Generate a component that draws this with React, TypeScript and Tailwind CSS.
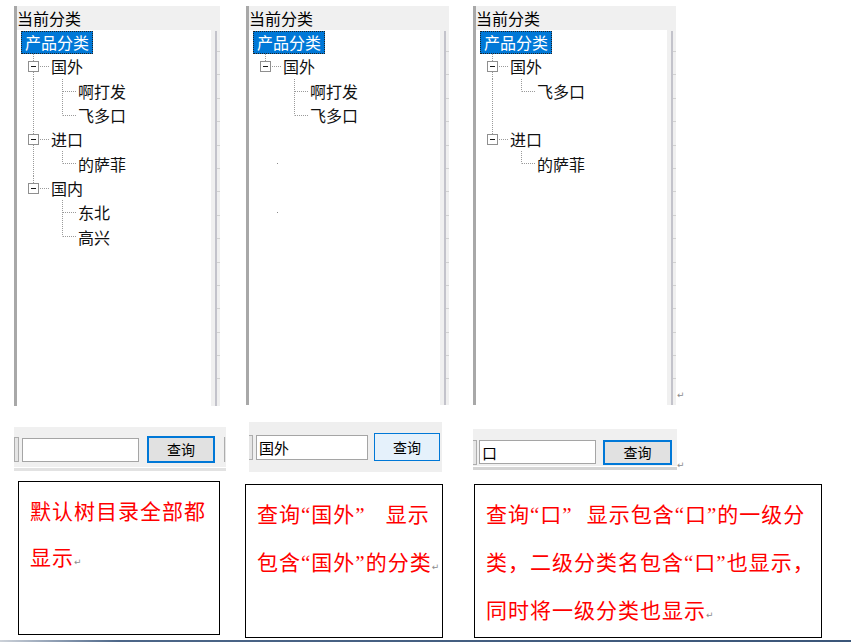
import type { ReactNode } from "react";

type Row =
  | { kind: "root" }
  | { kind: "l1"; label: string; more: boolean }
  | { kind: "l2"; label: string; trunk: boolean; last: boolean }
  | { kind: "gap"; trunk: boolean; dot?: boolean };

const DOT = { stroke: "#9a9a9a", strokeWidth: 1, strokeDasharray: "1 1" };

const fullTree: Row[] = [
  { kind: "root" },
  { kind: "l1", label: "国外", more: true },
  { kind: "l2", label: "啊打发", trunk: true, last: false },
  { kind: "l2", label: "飞多口", trunk: true, last: true },
  { kind: "l1", label: "进口", more: true },
  { kind: "l2", label: "的萨菲", trunk: true, last: true },
  { kind: "l1", label: "国内", more: false },
  { kind: "l2", label: "东北", trunk: false, last: false },
  { kind: "l2", label: "高兴", trunk: false, last: true },
];

const abroadTree: Row[] = [
  { kind: "root" },
  { kind: "l1", label: "国外", more: false },
  { kind: "l2", label: "啊打发", trunk: false, last: false },
  { kind: "l2", label: "飞多口", trunk: false, last: true },
  { kind: "gap", trunk: false },
  { kind: "gap", trunk: false, dot: true },
  { kind: "gap", trunk: false },
  { kind: "gap", trunk: false, dot: true },
];

const mouthTree: Row[] = [
  { kind: "root" },
  { kind: "l1", label: "国外", more: true },
  { kind: "l2", label: "飞多口", trunk: true, last: true },
  { kind: "gap", trunk: true },
  { kind: "l1", label: "进口", more: false },
  { kind: "l2", label: "的萨菲", trunk: false, last: true },
];

function TreeRow({ row }: { row: Row }) {
  if (row.kind === "root") {
    return (
      <div className="flex h-[24.3px] items-center">
        <span className="ml-[4px] flex h-[23px] items-center border border-dotted border-[#222] bg-[#0078d7] px-[3px] text-[16px] leading-none text-white">
          产品分类
        </span>
      </div>
    );
  }

  if (row.kind === "gap") {
    return (
      <div className="flex h-[24.3px] items-center">
        <svg width="34" height="100%" className="shrink-0">
          {row.trunk && <line x1="16.5" y1="0" x2="16.5" y2="25" {...DOT} />}
          {row.dot && <rect x="28" y="12" width="1" height="1" fill="#8a8a8a" />}
        </svg>
      </div>
    );
  }

  if (row.kind === "l1") {
    return (
      <div className="flex h-[24.3px] items-center">
        <svg width="34" height="100%" className="shrink-0">
          <line x1="16.5" y1="0" x2="16.5" y2="7" {...DOT} />
          {row.more && <line x1="16.5" y1="18" x2="16.5" y2="25" {...DOT} />}
          <rect x="11.5" y="7.5" width="10" height="10" fill="white" stroke="#8f8f8f" />
          <line x1="14" y1="12.5" x2="19" y2="12.5" stroke="#1a1a1a" />
          <line x1="23" y1="12.5" x2="32" y2="12.5" {...DOT} />
        </svg>
        <span className="text-[16px] leading-none text-[#111]">{row.label}</span>
      </div>
    );
  }

  return (
    <div className="flex h-[24.3px] items-center">
      <svg width="61" height="100%" className="shrink-0">
        {row.trunk && <line x1="16.5" y1="0" x2="16.5" y2="25" {...DOT} />}
        <line x1="45.5" y1="0" x2="45.5" y2={row.last ? 12.5 : 25} {...DOT} />
        <line x1="46" y1="12.5" x2="59" y2="12.5" {...DOT} />
      </svg>
      <span className="text-[16px] leading-none text-[#111]">{row.label}</span>
    </div>
  );
}

function TreePanel({ rows, className }: { rows: Row[]; className: string }) {
  return (
    <div className={`flex flex-col border-l-[3px] border-[#a8a8a8] bg-[#f0f0f0] ${className}`}>
      <div className="flex h-[24px] shrink-0 items-center text-[16px] leading-none text-black">当前分类</div>
      <div className="flex min-h-0 flex-1 overflow-hidden">
        <div className="flex-1 bg-white">
          {rows.map((row, i) => (
            <TreeRow key={i} row={row} />
          ))}
        </div>
        <div className="flex w-[9px]">
          <div className="w-[4px]" />
          <div className="mt-px w-[2px] bg-[#c3c3cb]" />
          <div className="flex w-[3px] flex-col pt-[21px]">
            {Array.from({ length: 15 }).map((_, i) => (
              <div key={i} className="h-[23.4px] shrink-0 border-t border-[#d2d2d2]" />
            ))}
          </div>
        </div>
      </div>
    </div>
  );
}

function Mark() {
  return (
    <span className="font-['DejaVu_Sans',sans-serif] text-[9px] leading-none tracking-normal text-[#8c8c8c]">
      ↵
    </span>
  );
}

function Quote({ children }: { children: ReactNode }) {
  return <span className="font-['Liberation_Serif',serif]">{children}</span>;
}

function NoteBox({ className, children }: { className: string; children: ReactNode }) {
  return (
    <div
      className={`border border-black pl-[11px] pt-[5px] text-[21px] leading-[46px] tracking-[1px] whitespace-nowrap text-[#ff0000] ${className}`}
    >
      {children}
    </div>
  );
}

export default function App() {
  return (
    <div className="flex h-[642px] w-[851px] flex-col overflow-hidden bg-white font-['Noto_Sans_CJK_SC','Noto_Sans',sans-serif]">
      <div className="flex h-[640px] items-start">
        {/* 默认 */}
        <div className="ml-[14px] mt-[6px] flex w-[212px] flex-col items-start">
          <TreePanel rows={fullTree} className="h-[400px] w-[206px]" />
          <div className="mt-[21px] flex h-[44px] w-[212px] flex-col bg-[#f0f0f0]">
            <div className="flex flex-1 items-center pt-[5px]">
              <div className="h-[25px] w-[5px] border border-[#adadad] bg-[#e5e5e5]" />
              <input
                readOnly
                value=""
                className="ml-[3px] h-[24px] w-[117px] border border-[#a5a5a5] bg-white px-[2px] text-[15px] outline-none"
              />
              <button className="ml-[8px] h-[27px] w-[68px] border-2 border-[#0078d7] bg-[#e1e1e1] text-[14px] text-black">
                查询
              </button>
              <div className="ml-[9px] h-[25px] w-[2px] border-l border-[#adadad] bg-[#e5e5e5]" />
            </div>
            <div className="h-px bg-white" />
            <div className="h-[3px] bg-[#e2e2e2]" />
          </div>
          <NoteBox className="ml-[4px] mt-[10px] h-[154px] w-[202px]">
            <div>默认树目录全部都</div>
            <div>
              显示
              <Mark />
            </div>
          </NoteBox>
        </div>

        {/* 国外 */}
        <div className="ml-[19px] mt-[6px] flex w-[204px] flex-col items-start">
          <TreePanel rows={abroadTree} className="ml-px h-[399px] w-[203px]" />
          <div className="ml-[4px] mt-[17px] flex h-[50px] w-[193px] items-center bg-[#efefef]">
            <div className="h-[25px] w-[4px] border border-l-0 border-[#adadad] bg-[#e5e5e5]" />
            <input
              readOnly
              value="国外"
              className="ml-[3px] h-[25px] w-[112px] border border-[#a5a5a5] bg-white px-[2px] text-[15px] text-black outline-none"
            />
            <button className="ml-[6px] h-[28px] w-[66px] border border-[#0078d7] bg-[#e5f1fb] text-[14px] text-black">
              查询
            </button>
          </div>
          <NoteBox className="mt-[12px] h-[154px] w-[198px]">
            <div>
              查询<Quote>“</Quote>国外<Quote>”</Quote>
              <span className="inline-block w-[20px]" />
              显示
            </div>
            <div>
              包含<Quote>“</Quote>国外<Quote>”</Quote>的分类
              <Mark />
            </div>
          </NoteBox>
        </div>

        {/* 口 */}
        <div className="ml-[24px] mt-[6px] flex flex-col items-start">
          <div className="flex items-end">
            <TreePanel rows={mouthTree} className="h-[399px] w-[203px]" />
            <span className="mb-[2px] ml-px">
              <Mark />
            </span>
          </div>
          <div className="mt-[24px] flex items-end">
            <div className="flex h-[41px] w-[204px] flex-col bg-[#f0f0f0]">
              <div className="flex h-[37px] items-center pt-[9px]">
                <div className="h-[25px] w-[4px] border border-l-0 border-[#adadad] bg-[#e5e5e5]" />
                <input
                  readOnly
                  value="口"
                  className="ml-[2px] h-[24px] w-[117px] border border-[#a5a5a5] bg-white px-[2px] text-[15px] text-black outline-none"
                />
                <button className="ml-[7px] h-[25px] w-[69px] border-2 border-[#0078d7] bg-[#e1e1e1] text-[14px] text-black">
                  查询
                </button>
              </div>
              <div className="h-px bg-white" />
              <div className="h-[3px] bg-[#d4d4d4]" />
            </div>
            <Mark />
          </div>
          <NoteBox className="ml-px mt-[14px] h-[154px] w-[348px]">
            <div>
              查询<Quote>“</Quote>口<Quote>”</Quote>
              <span className="inline-block w-[14px]" />
              显示包含<Quote>“</Quote>口<Quote>”</Quote>的一级分
            </div>
            <div>
              类，二级分类名包含<Quote>“</Quote>口<Quote>”</Quote>也显示，
            </div>
            <div>
              同时将一级分类也显示
              <Mark />
            </div>
          </NoteBox>
        </div>
      </div>
      <div className="h-[2px] bg-linear-to-r from-[#cdd2d9] via-[#4c6688] via-[14%] to-[#3b5679]" />
    </div>
  );
}
